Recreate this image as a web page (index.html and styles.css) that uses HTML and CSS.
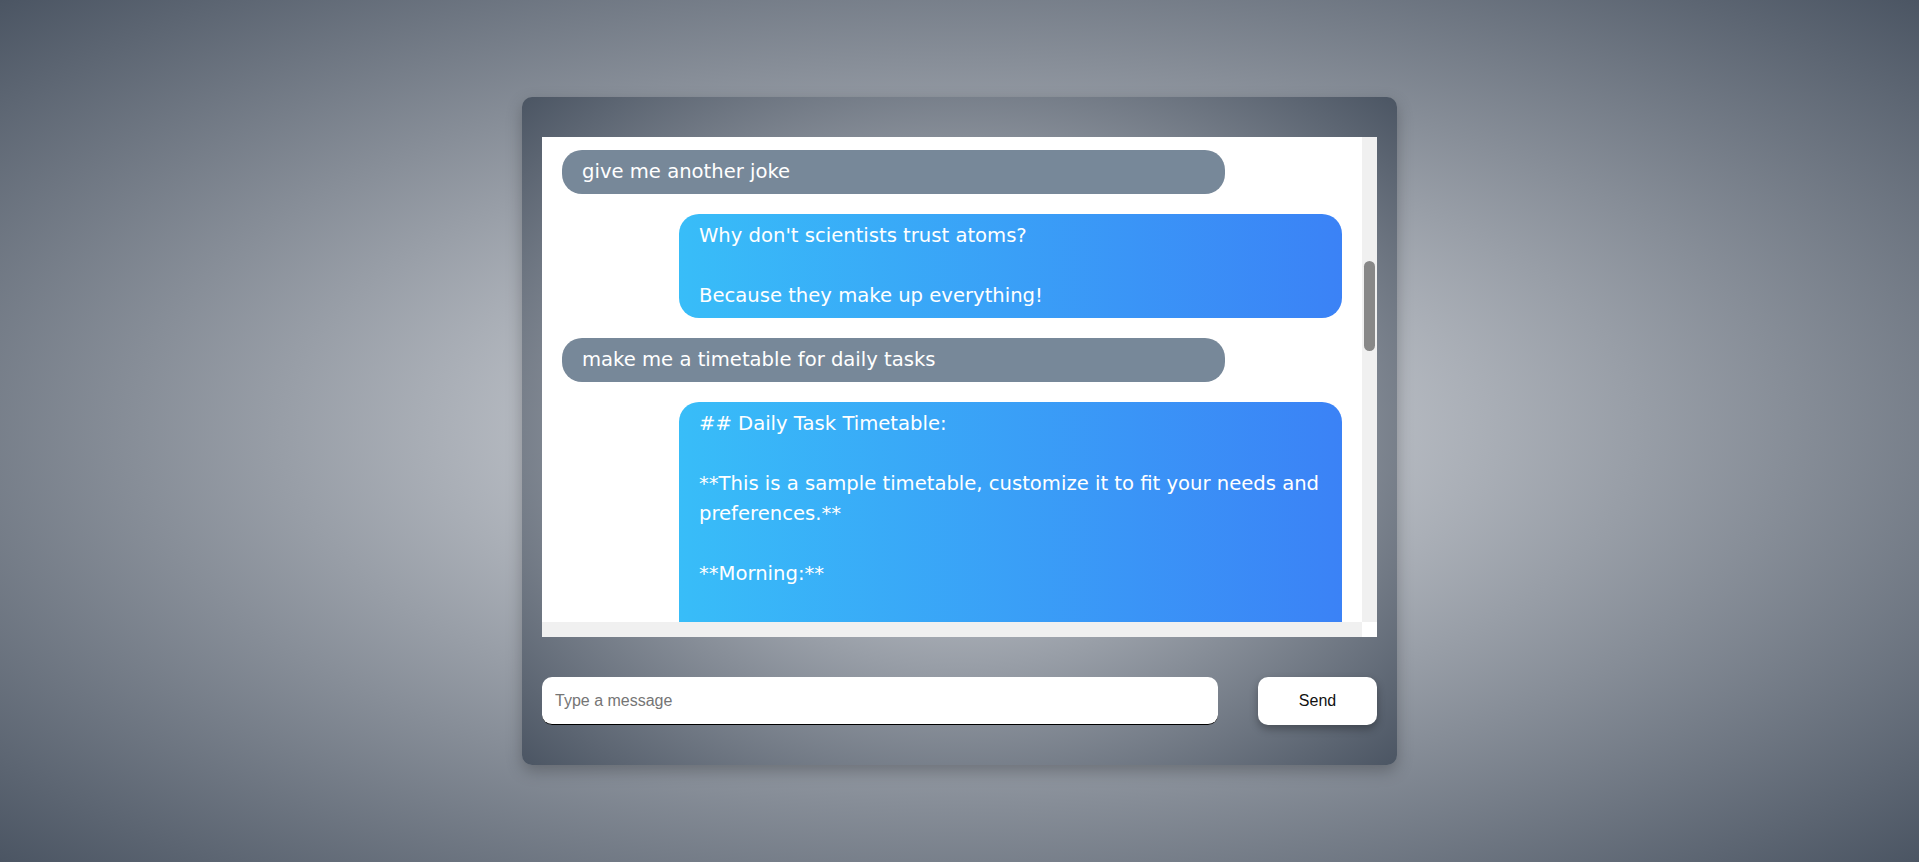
FILE: index.html
```html
<!DOCTYPE html>
<html lang="en">
<head>
<meta charset="utf-8">
<title>Chat</title>
<link rel="stylesheet" href="styles.css">
</head>
<body>
<div class="chat-container">
  <div class="chat-box">
    <div class="chat-viewport" id="viewport">
      <div class="messages">
        <div class="message user">tell me a joke</div>
        <div class="message bot">Why did the scarecrow win an award?<br><br>Because he was outstanding in his field!</div>
        <div class="message user">that was funny, tell me another one</div>
        <div class="message bot">What do you call a fake noodle?<br><br>An impasta!</div>
        <div class="message user">one more please</div>
        <div class="message bot">Why did the math book look so sad?<br><br>Because it had too many problems!<br><br>Want to hear another one?</div>
        <div class="message user" id="anchor">give me another joke</div>
        <div class="message bot">Why don't scientists trust atoms?<br><br>Because they make up everything!</div>
        <div class="message user">make me a timetable for daily tasks</div>
        <div class="message bot">## Daily Task Timetable:<br><br>**This is a sample timetable, customize it to fit your needs and preferences.**<br><br>**Morning:**<br><br>* **6:00 AM - 6:30 AM:** Wake up, hydrate, and stretch<br>* **6:30 AM - 7:00 AM:** Exercise (yoga, jogging, or a workout)<br>* **7:00 AM - 7:30 AM:** Shower and get dressed<br>* **7:30 AM - 8:00 AM:** Breakfast<br>* **8:00 AM - 8:30 AM:** Plan your day and review your to-do list<br>* **8:30 AM - 12:00 PM:** Focused work or study session<br><br>**Afternoon:**<br><br>* **12:00 PM - 1:00 PM:** Lunch break<br>* **1:00 PM - 3:00 PM:** Meetings, calls, or collaborative work<br>* **3:00 PM - 3:15 PM:** Short break (walk, snack, or relax)<br>* **3:15 PM - 5:00 PM:** Continue work or study, finish pending tasks<br><br>**Evening:**<br><br>* **5:00 PM - 6:00 PM:** Household chores and errands<br>* **6:00 PM - 7:00 PM:** Dinner<br>* **7:00 PM - 8:30 PM:** Free time (hobbies, family, friends)<br>* **8:30 PM - 9:30 PM:** Reading or learning something new<br>* **9:30 PM - 10:00 PM:** Prepare for tomorrow and wind down<br>* **10:00 PM:** Sleep<br><br>**Tips:**<br><br>* Prioritize your most important tasks.<br>* Take regular breaks to avoid burnout.<br>* Be flexible and adjust the schedule as needed.</div>
        <div class="message user">thanks!</div>
        <div class="message bot">You're welcome! Let me know if you need anything else.</div>
        <div class="message user">can you make one for weekends too?</div>
        <div class="message bot">## Weekend Timetable:<br><br>* **8:00 AM:** Wake up and relaxed breakfast<br>* **10:00 AM:** Outdoor activity or exercise<br>* **1:00 PM:** Lunch with family or friends<br>* **3:00 PM:** Hobbies and personal projects<br>* **7:00 PM:** Dinner and movie night<br>* **11:00 PM:** Sleep</div>
      </div>
    </div>
    <div class="scroll-track vertical" id="vtrack">
      <div class="scroll-thumb" id="vthumb"></div>
    </div>
    <div class="scroll-track horizontal"></div>
    <div class="scroll-corner"></div>
  </div>
  <form class="input-row" onsubmit="return false;">
    <input class="message-input" type="text" placeholder="Type a message">
    <button class="send-button" type="button">Send</button>
  </form>
</div>
<script src="script.js"></script>
</body>
</html>
```

FILE: styles.css
```css
html, body {
  margin: 0;
  padding: 0;
}

body {
  height: 100vh;
  display: flex;
  align-items: center;
  justify-content: center;
  background: radial-gradient(ellipse at center, #e5e7eb 0%, #4b5563 100%);
  font-family: "DejaVu Sans", sans-serif;
}

.chat-container {
  width: 875px;
  box-sizing: border-box;
  padding: 40px 20px;
  border-radius: 10px;
  background: radial-gradient(ellipse at center, #e5e7eb 0%, #4b5563 100%);
  box-shadow: 0 6px 16px rgba(0, 0, 0, 0.25);
}

.chat-box {
  height: 500px;
  display: grid;
  grid-template-columns: 1fr 15px;
  grid-template-rows: 1fr 15px;
  background: #ffffff;
}

.chat-viewport {
  min-height: 0;
  overflow-y: scroll;
  overflow-x: hidden;
  scrollbar-width: none;
}

.chat-viewport::-webkit-scrollbar {
  display: none;
}

.scroll-track {
  background: #f0f0f0;
}

.scroll-track.vertical {
  position: relative;
}

.scroll-thumb {
  position: absolute;
  left: 2px;
  right: 2px;
  border-radius: 6px;
  background: #888888;
}

.scroll-corner {
  background: #ffffff;
}

.messages {
  display: flex;
  flex-direction: column;
  gap: 20px;
  padding: 20px;
}

.message {
  width: 85%;
  box-sizing: border-box;
  padding: 7px 20px;
  border-radius: 20px;
  color: #ffffff;
  font-size: 19.6px;
  line-height: 30px;
}

.message.user {
  align-self: flex-start;
  background: #778899;
}

.message.bot {
  align-self: flex-end;
  background: linear-gradient(to right, #38bdf8, #3b82f6);
}

.input-row {
  display: flex;
  gap: 40px;
  margin: 40px 0 0;
}

.message-input {
  flex: 1;
  height: 48px;
  box-sizing: border-box;
  border: none;
  border-bottom: 1px solid #000000;
  border-radius: 10px;
  padding: 0 13px;
  font-family: "Liberation Sans", Arial, sans-serif;
  font-size: 16px;
  color: #000;
  background: #ffffff;
  outline: none;
}

.message-input::placeholder {
  color: #757575;
}

.send-button {
  width: 119px;
  height: 48px;
  border: none;
  border-radius: 10px;
  background: #ffffff;
  color: #111111;
  font-family: "Liberation Sans", Arial, sans-serif;
  font-size: 16px;
  box-shadow: 0 4px 8px rgba(0, 0, 0, 0.3);
}
```

FILE: script.js
```js
(function () {
  var vp = document.getElementById('viewport');
  var anchor = document.getElementById('anchor');
  var track = document.getElementById('vtrack');
  var thumb = document.getElementById('vthumb');

  function updateThumb() {
    var trackLen = track.clientHeight;
    var len = trackLen * vp.clientHeight / vp.scrollHeight;
    var max = vp.scrollHeight - vp.clientHeight;
    var pos = max > 0 ? (trackLen - len) * vp.scrollTop / max : 0;
    thumb.style.top = (pos + 2) + 'px';
    thumb.style.height = (len - 4) + 'px';
  }

  var offset = anchor.getBoundingClientRect().top - vp.getBoundingClientRect().top + vp.scrollTop;
  vp.scrollTop = offset - 13;
  updateThumb();
  vp.addEventListener('scroll', updateThumb);
})();
```
